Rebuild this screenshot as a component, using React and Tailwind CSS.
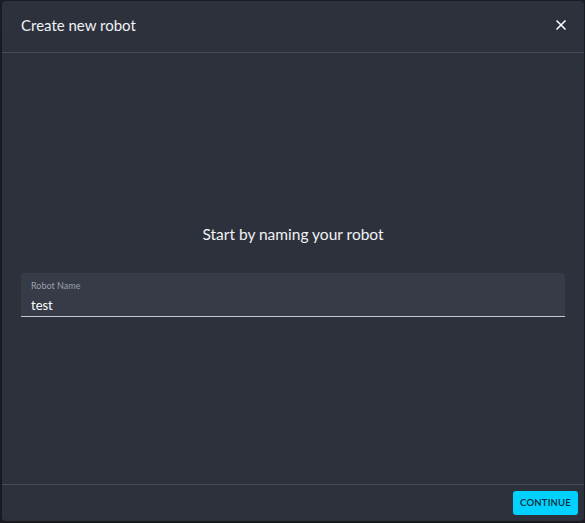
import React, { useState } from 'react';
import { X } from 'lucide-react';

export default function App() {
  const [name, setName] = useState('test');

  return (
    <div className="relative w-[585px] h-[523px] bg-[#1a1d23] overflow-hidden font-['Lato','Noto_Sans',sans-serif]">
      {/* Dialog */}
      <div className="absolute left-[2px] top-[1px] right-[1px] bottom-[2px] bg-[#2c313c] rounded-[4px] flex flex-col shadow-2xl">
        <div className="h-[52px] flex items-center justify-between pl-[19px] pr-[11px] border-b border-[#474c58]">
          <h2 className="text-[15px] text-[#f1f2f4] -mt-[2px]">Create new robot</h2>
          <button className="w-6 h-6 flex items-center justify-center text-white -mt-[3px]">
            <X size={16} strokeWidth={2.5} />
          </button>
        </div>

        <div className="flex-1 px-[19px] pt-[171px]">
          <p className="text-center text-[15.5px] leading-[20px] text-[#f1f2f4] mb-[29px]">Start by naming your robot</p>
          <div className="bg-[#363b47] rounded-t-[4px] border-b border-[#c5c8ce] h-[44px] px-[10px] pt-[7px]">
            <label className="block text-[9px] leading-[12px] text-[#9aa0aa]">Robot Name</label>
            <input
              value={name}
              onChange={e => setName(e.target.value)}
              className="w-full -mt-[3px] bg-transparent outline-none text-[13px] leading-[20px] text-white"
            />
          </div>
        </div>

        <div className="h-[36px] border-t border-[#474c58] flex items-center justify-end pr-[6px] pt-[1px] mb-[1px]">
          <button className="h-[24px] px-[7px] rounded-[3px] bg-[#00d1ff] text-[#0d2a35] text-[9.5px] tracking-[0.2px] font-semibold">
            CONTINUE
          </button>
        </div>
      </div>
    </div>
  );
}
